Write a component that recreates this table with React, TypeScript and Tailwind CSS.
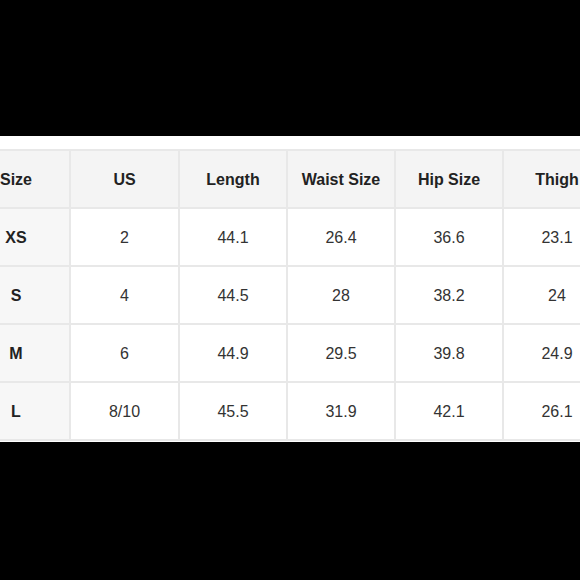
const headers = ["Size", "US", "Length", "Waist Size", "Hip Size", "Thigh"];

const rows = [
  ["XS", "2", "44.1", "26.4", "36.6", "23.1"],
  ["S", "4", "44.5", "28", "38.2", "24"],
  ["M", "6", "44.9", "29.5", "39.8", "24.9"],
  ["L", "8/10", "45.5", "31.9", "42.1", "26.1"],
];

const App = () => {
  return (
    <div
      className="w-[580px] h-[580px] bg-black overflow-hidden flex flex-col"
      style={{ fontFamily: '"Liberation Sans", Arial, sans-serif' }}
    >
      <div className="h-[136px] shrink-0" />
      <div className="h-[306px] shrink-0 bg-white pt-[13px] overflow-hidden">
        <div className="ml-[-39px] w-max grid grid-cols-[106px_107px_106px_106px_106px_106px] gap-[2px] p-[2px] bg-[#e8e8e8]">
          {headers.map((h) => (
            <div
              key={h}
              className="h-[56px] pt-[2px] bg-[#f4f4f4] flex items-center justify-center text-[16px] font-bold text-[#222]"
            >
              {h}
            </div>
          ))}
          {rows.map((row) =>
            row.map((cell, i) => (
              <div
                key={row[0] + i}
                className={
                  i === 0
                    ? "h-[56px] pt-[2px] bg-[#f7f7f7] flex items-center justify-center text-[16px] font-bold text-[#222]"
                    : "h-[56px] pt-[2px] bg-white flex items-center justify-center text-[16px] text-[#333]"
                }
              >
                {cell}
              </div>
            )),
          )}
        </div>
      </div>
      <div className="flex-1" />
    </div>
  );
};

export default App;
